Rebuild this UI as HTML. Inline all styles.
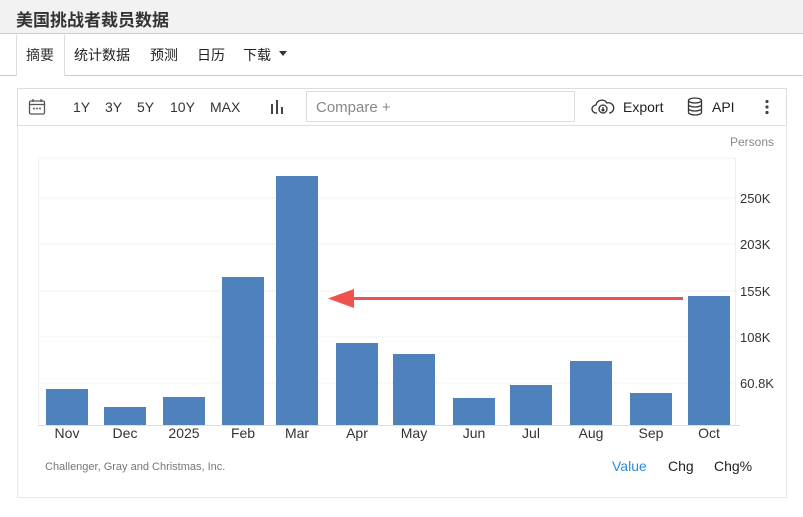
<!DOCTYPE html>
<html><head><meta charset="utf-8"><style>
*{margin:0;padding:0;box-sizing:border-box}
body{width:803px;height:517px;background:#fff;font-family:"Liberation Sans","Noto Sans CJK SC",sans-serif;position:relative;overflow:hidden;color:#222}
.a{position:absolute;white-space:nowrap}
</style></head><body>
<div class="a" style="left:0;top:0;width:803px;height:34px;background:#f2f2f2;border-bottom:1px solid #ccc"></div>
<div class="a" style="left:16px;top:6px;font-size:17px;font-weight:bold;color:#333">美国挑战者裁员数据</div>
<div class="a" style="left:0;top:75px;width:803px;height:1px;background:#ccc"></div>
<div class="a" style="left:16px;top:35px;width:49px;height:41px;background:#fff;border-left:1px solid #ddd;border-right:1px solid #ddd"></div>
<div class="a" style="left:26px;top:45px;font-size:14px;color:#333">摘要</div>
<div class="a" style="left:74px;top:45px;font-size:14px">统计数据</div>
<div class="a" style="left:150px;top:45px;font-size:14px">预测</div>
<div class="a" style="left:197px;top:45px;font-size:14px">日历</div>
<div class="a" style="left:243px;top:45px;font-size:14px">下载</div>
<div class="a" style="left:279px;top:51px;border-left:4px solid transparent;border-right:4px solid transparent;border-top:5px solid #333"></div>

<div class="a" style="left:17px;top:88px;width:770px;height:410px;border:1px solid #e8e8e8"></div>
<div class="a" style="left:17px;top:88px;width:770px;height:38px;border:1px solid #ddd"></div>
<svg class="a" style="left:28px;top:98px" width="18" height="18" viewBox="0 0 18 18" fill="none" stroke="#555" stroke-width="1.3"><rect x="1.5" y="3" width="15" height="13" rx="1.5"/><line x1="1.5" y1="6.5" x2="16.5" y2="6.5"/><line x1="5" y1="1" x2="5" y2="4"/><line x1="13" y1="1" x2="13" y2="4"/><circle cx="6" cy="10.5" r=".4"/><circle cx="9" cy="10.5" r=".4"/><circle cx="12" cy="10.5" r=".4"/></svg>
<div class="a" style="left:73px;top:99px;font-size:14px;color:#333">1Y</div>
<div class="a" style="left:105px;top:99px;font-size:14px;color:#333">3Y</div>
<div class="a" style="left:137px;top:99px;font-size:14px;color:#333">5Y</div>
<div class="a" style="left:170px;top:99px;font-size:14px;color:#333">10Y</div>
<div class="a" style="left:210px;top:99px;font-size:14px;color:#333">MAX</div>
<svg class="a" style="left:270px;top:99px" width="16" height="16"><rect x="1" y="5" width="2" height="10" fill="#444"/><rect x="6" y="1" width="2" height="14" fill="#444"/><rect x="11" y="8" width="2" height="7" fill="#444"/></svg>
<div class="a" style="left:306px;top:91px;width:269px;height:31px;border:1px solid #ddd"></div>
<div class="a" style="left:316px;top:99px;font-size:15px;color:#888">Compare +</div>
<svg class="a" style="left:591px;top:98px" width="24" height="18" viewBox="0 0 24 18" fill="none" stroke="#333" stroke-width="1.3"><path d="M6 15H5a4 4 0 0 1 0-8 6 6 0 0 1 11-2 4.5 4.5 0 0 1 3 10h-1"/><circle cx="12" cy="11" r="4"/><path d="M12 9v4M10.5 11.5l1.5 1.5 1.5-1.5"/></svg>
<div class="a" style="left:623px;top:99px;font-size:14px">Export</div>
<svg class="a" style="left:687px;top:97px" width="16" height="19" viewBox="0 0 16 19" fill="none" stroke="#333" stroke-width="1.3"><ellipse cx="8" cy="3.5" rx="6.5" ry="2.5"/><path d="M1.5 3.5v12c0 1.4 2.9 2.5 6.5 2.5s6.5-1.1 6.5-2.5v-12M1.5 7.5c0 1.4 2.9 2.5 6.5 2.5s6.5-1.1 6.5-2.5M1.5 11.5c0 1.4 2.9 2.5 6.5 2.5s6.5-1.1 6.5-2.5"/></svg>
<div class="a" style="left:712px;top:99px;font-size:14px">API</div>
<svg class="a" style="left:764px;top:99px" width="6" height="16"><circle cx="3" cy="2.5" r="1.6" fill="#444"/><circle cx="3" cy="8" r="1.6" fill="#444"/><circle cx="3" cy="13.5" r="1.6" fill="#444"/></svg>

<div class="a" style="left:730px;top:135px;font-size:12px;color:#888">Persons</div>
<svg class="a" style="left:0;top:0" width="803" height="517">
<g stroke="#e6e6e6" stroke-dasharray="1 1">
<line x1="38" y1="158" x2="735" y2="158"/><line x1="38" y1="198" x2="735" y2="198"/><line x1="38" y1="244" x2="735" y2="244"/><line x1="38" y1="291" x2="735" y2="291"/><line x1="38" y1="337" x2="735" y2="337"/><line x1="38" y1="383" x2="735" y2="383"/>
</g>
<line x1="38.5" y1="158" x2="38.5" y2="425" stroke="#eee"/><line x1="735.5" y1="158" x2="735.5" y2="425" stroke="#eee"/>
<line x1="38" y1="425.5" x2="740" y2="425.5" stroke="#ddd"/>
<g fill="#4f81bd">
<rect x="46" y="389" width="42" height="36"/><rect x="104" y="407" width="42" height="18"/><rect x="163" y="397" width="42" height="28"/><rect x="222" y="277" width="42" height="148"/><rect x="276" y="176" width="42" height="249"/><rect x="336" y="343" width="42" height="82"/><rect x="393" y="354" width="42" height="71"/><rect x="453" y="398" width="42" height="27"/><rect x="510" y="385" width="42" height="40"/><rect x="570" y="361" width="42" height="64"/><rect x="630" y="393" width="42" height="32"/><rect x="688" y="296" width="42" height="129"/>
</g>
<line x1="683" y1="298.5" x2="345" y2="298.5" stroke="#f05050" stroke-width="3"/>
<polygon points="328,298.5 354,289 354,308" fill="#f05050"/>
<g font-family="Liberation Sans,sans-serif" font-size="13" fill="#333">
<text x="740" y="203">250K</text><text x="740" y="249">203K</text><text x="740" y="296">155K</text><text x="740" y="342">108K</text><text x="740" y="388">60.8K</text>
<g text-anchor="middle" font-size="14">
<text x="67" y="438">Nov</text><text x="125" y="438">Dec</text><text x="184" y="438">2025</text><text x="243" y="438">Feb</text><text x="297" y="438">Mar</text><text x="357" y="438">Apr</text><text x="414" y="438">May</text><text x="474" y="438">Jun</text><text x="531" y="438">Jul</text><text x="591" y="438">Aug</text><text x="651" y="438">Sep</text><text x="709" y="438">Oct</text>
</g></g>
</svg>
<div class="a" style="left:45px;top:461px;font-size:11px;color:#777">Challenger, Gray and Christmas, Inc.</div>
<div class="a" style="left:612px;top:458px;font-size:14px;color:#2b8ae2">Value</div>
<div class="a" style="left:668px;top:458px;font-size:14px">Chg</div>
<div class="a" style="left:714px;top:458px;font-size:14px">Chg%</div>
</body></html>
